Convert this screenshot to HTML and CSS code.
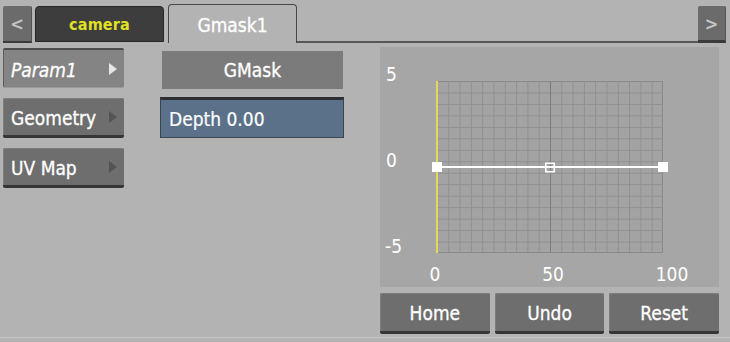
FILE: index.html
```html
<!DOCTYPE html>
<html>
<head>
<meta charset="utf-8">
<link rel="stylesheet" href="styles.css">
</head>
<body>
<div class="app">
  <div class="tabbar">
    <div class="nav prev">&lt;</div>
    <div class="tab camera">camera</div>
    <div class="tab active">Gmask1</div>
    <div class="tab-fill"></div>
    <div class="nav next">&gt;</div>
  </div>
  <div class="main">
    <div class="sidebar">
      <div class="side-btn selected"><span class="lbl italic">Param1</span><span class="arrow"></span></div>
      <div class="side-btn"><span class="lbl">Geometry</span><span class="arrow"></span></div>
      <div class="side-btn"><span class="lbl">UV Map</span><span class="arrow"></span></div>
    </div>
    <div class="middle">
      <div class="title-box">GMask</div>
      <div class="depth-field">Depth 0.00</div>
    </div>
    <div class="right">
      <div class="graph-panel">
        <svg class="graph" width="339" height="240" viewBox="0 0 339 240">
          <defs>
            <pattern id="grid" x="57" y="34" width="11.3" height="11.47" patternUnits="userSpaceOnUse">
              <path d="M0 0.5H11.3M0.5 0V11.47" stroke="#8f8f8f" stroke-width="1" fill="none"/>
            </pattern>
          </defs>
          <rect x="56" y="34" width="227" height="172" fill="#a3a3a3"/>
          <rect x="56" y="34" width="227" height="172" fill="url(#grid)"/>
          <rect x="56.5" y="34.5" width="226" height="171" fill="none" stroke="#8a8a8a" stroke-width="1"/>
          <line x1="170.5" y1="34" x2="170.5" y2="206" stroke="#7c7c7c" stroke-width="1"/>
          <line x1="57" y1="34" x2="57" y2="206" stroke="#e2d85a" stroke-width="2"/>
          <line x1="57" y1="120" x2="283" y2="120" stroke="#ffffff" stroke-width="2"/>
          <rect x="52" y="115" width="10" height="10" fill="#ffffff"/>
          <rect x="278" y="115" width="10" height="10" fill="#ffffff"/>
          <rect x="165.75" y="116.25" width="8.5" height="8.5" fill="none" stroke="#ffffff" stroke-width="1.5"/>
          <g class="axis">
            <text x="6" y="34">5</text>
            <text x="6" y="120">0</text>
            <text x="5" y="206">-5</text>
            <text x="55" y="234" text-anchor="middle">0</text>
            <text x="173" y="234" text-anchor="middle">50</text>
            <text x="292" y="234" text-anchor="middle">100</text>
          </g>
        </svg>
      </div>
      <div class="actions">
        <div class="btn">Home</div>
        <div class="btn">Undo</div>
        <div class="btn">Reset</div>
      </div>
    </div>
  </div>
  <div class="footer-line"></div>
</div>
</body>
</html>
```

FILE: styles.css
```css
* { box-sizing: border-box; }
html, body {
  margin: 0;
  padding: 0;
  background: #b3b3b3;
}
body {
  width: 730px;
  height: 342px;
  overflow: hidden;
  font-family: "DejaVu Sans Condensed", "DejaVu Sans", sans-serif;
  color: #ffffff;
}
.app {
  width: 730px;
  height: 342px;
}

/* Tab bar */
.tabbar {
  display: flex;
  align-items: flex-end;
  height: 43px;
  padding-left: 3px;
}
.nav {
  width: 29px;
  height: 37px;
  background: #6b6b6b;
  border-bottom: 2px solid #3a3a3a;
  border-right: 1px solid #555;
  border-radius: 2px 2px 0 0;
  color: #c4c4c4;
  font-size: 18px;
  font-weight: bold;
  display: flex;
  align-items: center;
  justify-content: center;
}
.nav.prev { margin-right: 3px; }
.nav.next { width: 28px; margin-right: 4px; border-bottom-width: 3px; }
.tab {
  width: 129px;
  display: flex;
  align-items: center;
  justify-content: center;
  border-radius: 4px 4px 0 0;
}
.tab.camera {
  height: 36px;
  margin-bottom: 1px;
  margin-right: 4px;
  background: #3d3d3d;
  border: 1px solid #262626;
  color: #e0e024;
  font-size: 16px;
  font-weight: bold;
  letter-spacing: 0.2px;
  padding-top: 1px;
}
.tab.active {
  height: 39px;
  background: #b3b3b3;
  border: 1px solid #484848;
  border-bottom: none;
  font-size: 19px;
  -webkit-text-stroke: 0.3px #ffffff;
  padding-top: 2px;
}
.tab-fill {
  flex: 1;
  height: 2px;
  background: #575757;
}

/* Main */
.main {
  display: flex;
  padding-left: 3px;
}
.sidebar {
  width: 121px;
  padding-top: 5px;
  display: flex;
  flex-direction: column;
  gap: 10px;
}
.side-btn {
  height: 40px;
  display: flex;
  align-items: center;
  justify-content: space-between;
  padding: 0 6px 0 8px;
  background: #6e6e6e;
  border-bottom: 3px solid #363636;
  border-radius: 2px;
  box-shadow: inset 1px 1px 0 #7e7e7e;
  font-size: 19px;
  -webkit-text-stroke: 0.3px #ffffff;
}
.side-btn .lbl { padding-top: 2px; }
.side-btn.selected {
  background: #848484;
  border-bottom: 1px solid #9a9a9a;
  border-top: 2px solid #4c4c4c;
  box-shadow: inset 1px 0 0 #5c5c5c;
}
.italic { font-style: italic; }
.arrow {
  width: 0;
  height: 0;
  border-top: 6px solid transparent;
  border-bottom: 6px solid transparent;
  border-left: 8px solid #545454;
  margin-right: 1px;
}
.selected .arrow { border-left-color: #e6e6e6; }

.middle {
  width: 184px;
  margin-left: 36px;
  display: flex;
  flex-direction: column;
}
.title-box {
  margin: 8px 1px 0 2px;
  height: 38px;
  background: #7b7b7b;
  display: flex;
  align-items: center;
  justify-content: center;
  font-size: 19px;
  -webkit-text-stroke: 0.3px #ffffff;
}
.depth-field {
  margin-top: 8px;
  height: 41px;
  background: #5b7189;
  border: 1px solid #3c4450;
  border-top: 3px solid #2d2f33;
  display: flex;
  align-items: center;
  padding-left: 8px;
  font-size: 19px;
  -webkit-text-stroke: 0.2px #ffffff;
}

.right {
  width: 339px;
  margin-left: 36px;
  display: flex;
  flex-direction: column;
}
.graph-panel {
  margin-top: 4px;
  height: 240px;
  background: #a6a6a6;
}
.graph { display: block; }
.axis text {
  font-family: "DejaVu Sans Condensed", "DejaVu Sans", sans-serif;
  font-size: 19px;
  fill: #ffffff;
}
.actions {
  margin-top: 6px;
  height: 41px;
  display: flex;
  gap: 5px;
}
.btn {
  flex: 1;
  background: #6e6e6e;
  border-bottom: 3px solid #363636;
  border-radius: 2px;
  box-shadow: inset 1px 1px 0 #7e7e7e;
  display: flex;
  align-items: center;
  justify-content: center;
  font-size: 19px;
  -webkit-text-stroke: 0.3px #ffffff;
  padding-top: 2px;
}

.footer-line {
  margin-top: 3px;
  height: 1px;
  background: #c6c6c6;
}
```
